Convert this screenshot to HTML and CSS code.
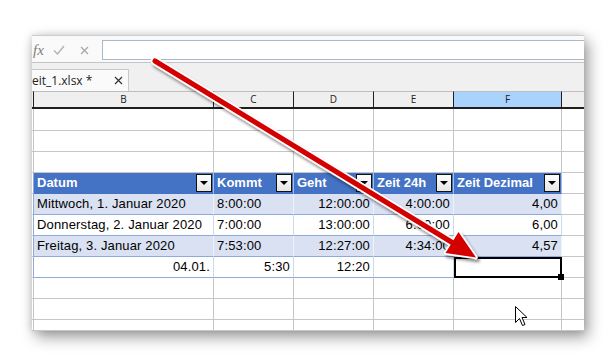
FILE: index.html
```html
<!DOCTYPE html>
<html>
<head>
<meta charset="utf-8">
<title>Arbeitszeit</title>
<link rel="stylesheet" href="styles.css">
</head>
<body>
<div class="window">
  <div class="fbar">
    <div class="ficons">
      <span class="fx">fx</span>
      <svg class="ok" width="12" height="10" viewBox="0 0 12 10"><path d="M1 5.5 L4.5 9 L11 1" fill="none" stroke="#b3b3b3" stroke-width="1.4"/></svg>
      <svg class="cancel" width="9" height="9" viewBox="0 0 9 9"><path d="M1 1 L8 8 M8 1 L1 8" fill="none" stroke="#a8a8a8" stroke-width="1.3"/></svg>
    </div>
    <div class="finput"></div>
  </div>
  <div class="tabbar">
    <div class="tab">
      <span class="tabname">eit_1.xlsx *</span>
      <svg class="tabclose" width="9" height="9" viewBox="0 0 9 9"><path d="M1 1 L8 8 M8 1 L1 8" fill="none" stroke="#333" stroke-width="1.2"/></svg>
    </div>
  </div>
  <div class="grid">
    <div class="ch cha"></div><div class="ch">B</div><div class="ch">C</div><div class="ch">D</div><div class="ch">E</div><div class="ch chs">F</div><div class="ch g"></div>

    <div class="a"></div><div></div><div></div><div></div><div></div><div></div><div class="g"></div>
    <div class="a"></div><div></div><div></div><div></div><div></div><div></div><div class="g"></div>
    <div class="a"></div><div></div><div></div><div></div><div></div><div></div><div class="g"></div>

    <div class="a ta"></div>
    <div class="th"><span>Datum</span><span class="dd"></span></div>
    <div class="th"><span>Kommt</span><span class="dd"></span></div>
    <div class="th"><span>Geht</span><span class="dd"></span></div>
    <div class="th"><span>Zeit 24h</span><span class="dd"></span></div>
    <div class="th"><span>Zeit Dezimal</span><span class="dd"></span></div>
    <div class="g"></div>

    <div class="a ta"></div>
    <div class="td b">Mittwoch, 1. Januar 2020</div>
    <div class="td b">8:00:00</div>
    <div class="td b r">12:00:00</div>
    <div class="td b r">4:00:00</div>
    <div class="td b r">4,00</div>
    <div class="g"></div>

    <div class="a ta"></div>
    <div class="td">Donnerstag, 2. Januar 2020</div>
    <div class="td">7:00:00</div>
    <div class="td r">13:00:00</div>
    <div class="td r">6:00:00</div>
    <div class="td r">6,00</div>
    <div class="g"></div>

    <div class="a ta"></div>
    <div class="td b">Freitag, 3. Januar 2020</div>
    <div class="td b">7:53:00</div>
    <div class="td b r">12:27:00</div>
    <div class="td b r">4:34:00</div>
    <div class="td b r">4,57</div>
    <div class="g"></div>

    <div class="a ta"></div>
    <div class="td r">04.01.</div>
    <div class="td r">5:30</div>
    <div class="td r">12:20</div>
    <div class="td"></div>
    <div class="td sel"></div>
    <div class="g"></div>

    <div class="a"></div><div></div><div></div><div></div><div></div><div></div><div class="g"></div>
    <div class="a"></div><div></div><div></div><div></div><div></div><div></div><div class="g"></div>
    <div class="a"></div><div></div><div></div><div></div><div></div><div></div><div class="g"></div>
  </div>
</div>

<svg class="overlay" width="616" height="363" viewBox="0 0 616 363">
  <defs>
    <filter id="sh" x="-10%" y="-10%" width="130%" height="130%">
      <feDropShadow dx="2" dy="3" stdDeviation="1.8" flood-color="#000" flood-opacity="0.45"/>
    </filter>
  </defs>
  <g filter="url(#sh)">
    <line x1="155" y1="61" x2="453" y2="243" stroke="#fff" stroke-width="8.5" stroke-linecap="round"/>
    <polygon points="476,257.5 445.5,253 458.5,232" fill="#fff" stroke="#fff" stroke-width="3.5" stroke-linejoin="round"/>
    <line x1="155" y1="61" x2="453" y2="243" stroke="#d40000" stroke-width="5" stroke-linecap="round"/>
    <polygon points="476,257.5 445.5,253 458.5,232" fill="#d40000"/>
  </g>
  <path class="cursor" d="M515.5 306.5 L515.5 322.5 L519.5 318.5 L522.5 325.5 L525 324.5 L522 317.5 L527 317.5 Z" fill="#fff" stroke="#000" stroke-width="1" stroke-linejoin="miter"/>
</svg>
</body>
</html>
```

FILE: styles.css
```css
* { box-sizing: border-box; }

body {
  margin: 0;
  width: 616px;
  height: 363px;
  overflow: hidden;
  position: relative;
  background: #fff;
  padding: 35px 0 0 32px;
  font-family: "Liberation Sans", Arial, sans-serif;
}

.window {
  width: 552px;
  height: 296px;
  background: #fff;
  overflow: hidden;
  box-shadow: 4px 6px 14px rgba(0, 0, 0, 0.4), -1px 0 7px rgba(0, 0, 0, 0.12);
}

/* formula bar */
.fbar {
  height: 28px;
  display: flex;
  background: #fafafa;
  border-top: 1px solid #cdcdcd;
  border-bottom: 1px solid #c4c4c4;
  padding: 4px 0 2px;
}
.ficons {
  width: 70px;
  display: flex;
  align-items: center;
}
.fx {
  font-family: "Liberation Serif", serif;
  font-style: italic;
  font-size: 15px;
  color: #7d7d7d;
  padding-left: 1px;
  width: 21px;
}
.cancel { margin-left: 15px; }
.finput {
  flex: 1;
  height: 20px;
  background: #fff;
  border: 1px solid #a9b9cc;
  border-right: none;
}

/* tab bar */
.tabbar {
  height: 28px;
  background: #f0f0f0;
  padding-top: 6px;
}
.tab {
  width: 97px;
  height: 22px;
  background: #fafafa;
  border-top: 1px solid #c9c9c9;
  border-right: 1px solid #c9c9c9;
  display: flex;
  align-items: center;
  justify-content: space-between;
  padding-right: 5px;
  font-family: "Open Sans", sans-serif;
  font-size: 12px;
  color: #222;
}

/* sheet grid */
.grid {
  display: grid;
  grid-template-columns: 2px 180px 80px 80px 80px 108px 22px;
  grid-template-rows: 18px 22px repeat(9, 21px) 11px;
}
.grid > div {
  border-right: 1px solid #c6c6c6;
  border-bottom: 1px solid #c6c6c6;
  font-size: 13px;
  line-height: 20px;
  letter-spacing: 0.15px;
  white-space: nowrap;
  overflow: hidden;
  padding: 0 3px;
  color: #000;
}
.grid > .a { padding: 0; }
.grid > .g { border-right: none; }

.grid > .ch {
  background: #efefef;
  border-top: 1px solid #bdbdbd;
  border-right: 1px solid #1e1e1e;
  border-bottom: 2px solid #1e1e1e;
  font-family: "Open Sans", sans-serif;
  font-size: 10px;
  line-height: 15px;
  letter-spacing: 0;
  text-align: center;
  color: #222;
  padding: 0;
}
.grid > .chs { background: #a9d2fc; }
.grid > .ch.g { border-right: none; }

.grid > .ta { border-right-color: #8ea9db; }

.grid > .th {
  background: #4472c4;
  color: #fff;
  font-weight: bold;
  letter-spacing: 0;
  border-right-color: #a9bce3;
  border-bottom-color: #4472c4;
  display: flex;
  align-items: center;
  justify-content: space-between;
  padding: 0 1px 0 3px;
}
.dd {
  width: 16px;
  height: 18px;
  background: linear-gradient(#fdfdfd, #e6e6e6);
  border: 1px solid #111;
  position: relative;
  flex: none;
}
.dd::after {
  content: "";
  position: absolute;
  left: 3px;
  top: 6px;
  border-left: 4px solid transparent;
  border-right: 4px solid transparent;
  border-top: 4px solid #000;
}

.grid > .td {
  border-right-color: #cfd8ea;
  border-bottom-color: #8ea9db;
}
.grid > .b { background: #d9e1f2; border-right-color: #eef2fa; }
.grid > .r { text-align: right; }

.grid > .sel {
  position: relative;
  overflow: visible;
}
.sel::after {
  content: "";
  position: absolute;
  left: 0;
  top: 0;
  right: -1px;
  bottom: -1px;
  border: 2px solid #000;
}
.sel::before {
  content: "";
  position: absolute;
  right: -3px;
  bottom: -3px;
  width: 6px;
  height: 6px;
  background: #000;
  z-index: 1;
}

.overlay {
  position: absolute;
  left: 0;
  top: 0;
  pointer-events: none;
}
```
